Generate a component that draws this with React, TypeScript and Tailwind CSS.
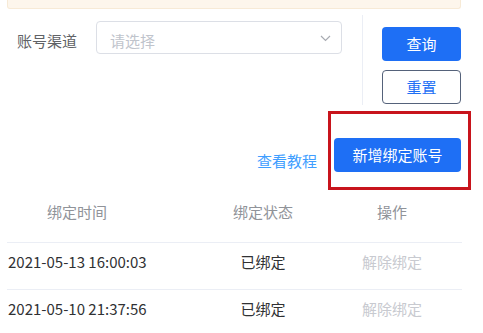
const font = { fontFamily: '"Microsoft YaHei", "Noto Sans CJK SC", "Noto Sans", sans-serif' };

const rows = [
  { time: "2021-05-13 16:00:03", status: "已绑定" },
  { time: "2021-05-10 21:37:56", status: "已绑定" },
];

export default function App() {
  return (
    <div className="w-[483px] h-[333px] bg-white overflow-hidden pl-[7px] text-[15px]" style={font}>
      {/* warning strip */}
      <div className="w-[454px] h-[9px] bg-[#fdf6ec] border border-t-0 border-[#f7ead6] rounded-b-[3px]" />

      {/* filter row */}
      <div className="flex mt-[6px] h-[90px]">
        <div className="flex items-start pt-[6px] w-[355px]">
          <div className="flex items-center h-[33px]">
            <span className="w-[89px] pl-[10px] text-[#606266] leading-[20px] pt-[6px]">账号渠道</span>
            <div className="w-[246px] h-[33px] border border-[#dcdfe6] rounded-[4px] flex items-center justify-between pl-[13px] pr-[10px]">
              <span className="text-[#c0c4cc] leading-[20px] pt-[6px]">请选择</span>
              <svg width="11" height="7" viewBox="0 0 11 7" className="mt-[2px]">
                <polyline points="1,1 5.5,5.5 10,1" fill="none" stroke="#a8abb2" strokeWidth="1.2" />
              </svg>
            </div>
          </div>
        </div>
        <div className="border-l border-[#ebeef5] pl-[19px] pt-[12px] flex flex-col gap-[9px]">
          <button className="w-[79px] h-[34px] rounded-[4px] bg-[#1e6ff5] text-white leading-[20px]">查询</button>
          <button className="w-[79px] h-[34px] rounded-[4px] bg-white border border-[#55627a] text-[#1e6ff5] leading-[20px]">重置</button>
        </div>
      </div>

      {/* action row */}
      <div className="flex items-center justify-end w-[464px] mt-[6px] gap-[11px]">
        <span className="text-[#409eff] leading-[20px] mt-[20px]">查看教程</span>
        <div className="border-[3px] border-[#c8141c] pl-[3px] pr-[7px] pt-[24px] pb-[15px]">
          <button className="w-[127px] h-[34px] rounded-[4px] bg-[#1e6ff5] text-white leading-[20px]">新增绑定账号</button>
        </div>
      </div>

      {/* table */}
      <div className="w-[455px]">
        <div className="flex h-[53px] pt-[12px] border-b border-[#ebeef5] text-[#909399] leading-[20px]">
          <div className="w-[176px] pl-[40px]">绑定时间</div>
          <div className="w-[160px] text-center">绑定状态</div>
          <div className="w-[98px] text-center">操作</div>
        </div>
        {rows.map((r, i) => (
          <div key={i} className={`flex h-[47px] pt-[9px] leading-[20px] ${i === 0 ? "border-b border-[#ebeef5]" : ""}`}>
            <div className="w-[176px] pl-[1px] text-[#303133]">{r.time}</div>
            <div className="w-[160px] text-center text-[#303133]">{r.status}</div>
            <div className="w-[98px] flex justify-center text-[#c8cad0]">解除绑定</div>
          </div>
        ))}
      </div>
    </div>
  );
}
